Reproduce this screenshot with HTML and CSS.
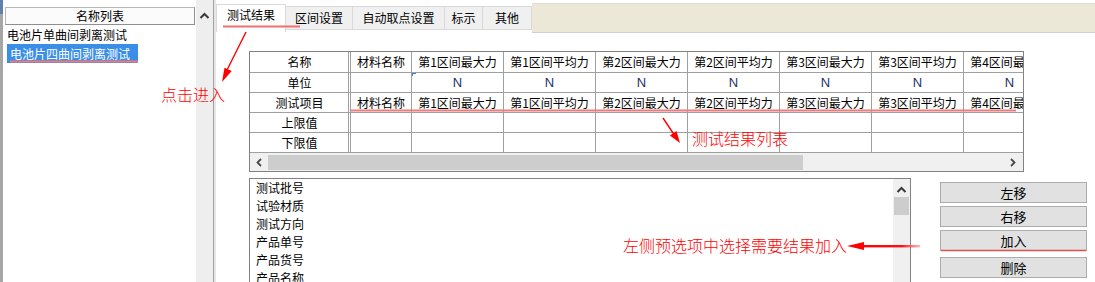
FILE: index.html
```html
<!DOCTYPE html>
<html lang="zh-CN">
<head>
<meta charset="utf-8">
<title>测试结果设置</title>
<link rel="stylesheet" href="styles.css">
</head>
<body>
<div class="app">
  <aside class="left">
    <div class="edge"></div>
    <div class="left-list">
      <div class="list-head">名称列表</div>
      <div class="list-item">电池片单曲间剥离测试</div>
      <div class="list-item"><span class="sel">电池片四曲间剥离测试</span></div>
    </div>
    <div class="vscroll">
      <svg class="vchev" width="11" height="7" viewBox="0 0 11 7"><polyline points="1.5,6 5.5,2 9.5,6" fill="none" stroke="#3a3a3a" stroke-width="2"/></svg>
    </div>
  </aside>
  <div class="splitter"></div>
  <main class="right">
    <nav class="tabs">
      <div class="tab active">测试结果</div>
      <div class="tab t2">区间设置</div>
      <div class="tab t3">自动取点设置</div>
      <div class="tab t4">标示</div>
      <div class="tab t5">其他</div>
      <div class="tab-fill"></div>
    </nav>
    <section class="tab-body">
      <div class="grid-box">
        <div class="grid-view">
          <div class="grid">
            <div class="cell head">名称</div>
            <div class="cell">材料名称</div>
            <div class="cell">第1区间最大力</div>
            <div class="cell">第1区间平均力</div>
            <div class="cell">第2区间最大力</div>
            <div class="cell">第2区间平均力</div>
            <div class="cell">第3区间最大力</div>
            <div class="cell">第3区间平均力</div>
            <div class="cell">第4区间最大力</div>

            <div class="cell head">单位</div>
            <div class="cell"></div>
            <div class="cell unit mark">N</div>
            <div class="cell unit">N</div>
            <div class="cell unit">N</div>
            <div class="cell unit">N</div>
            <div class="cell unit">N</div>
            <div class="cell unit">N</div>
            <div class="cell unit">N</div>

            <div class="cell head">测试项目</div>
            <div class="cell">材料名称</div>
            <div class="cell">第1区间最大力</div>
            <div class="cell">第1区间平均力</div>
            <div class="cell">第2区间最大力</div>
            <div class="cell">第2区间平均力</div>
            <div class="cell">第3区间最大力</div>
            <div class="cell">第3区间平均力</div>
            <div class="cell">第4区间最大力</div>

            <div class="cell head">上限值</div>
            <div class="cell"></div><div class="cell"></div><div class="cell"></div><div class="cell"></div>
            <div class="cell"></div><div class="cell"></div><div class="cell"></div><div class="cell"></div>

            <div class="cell head">下限值</div>
            <div class="cell"></div><div class="cell"></div><div class="cell"></div><div class="cell"></div>
            <div class="cell"></div><div class="cell"></div><div class="cell"></div><div class="cell"></div>
          </div>
        </div>
        <div class="hscroll">
          <svg class="harrow" width="6" height="9" viewBox="0 0 6 9"><polyline points="5,1 1.5,4.5 5,8" fill="none" stroke="#4a4a4a" stroke-width="1.8"/></svg>
          <div class="hthumb"></div>
          <svg class="harrow r" width="6" height="9" viewBox="0 0 6 9"><polyline points="1,1 4.5,4.5 1,8" fill="none" stroke="#4a4a4a" stroke-width="1.8"/></svg>
        </div>
      </div>
      <div class="bottom">
        <div class="pick-list">
          <div class="items">
            <div class="item">测试批号</div>
            <div class="item">试验材质</div>
            <div class="item">测试方向</div>
            <div class="item">产品单号</div>
            <div class="item">产品货号</div>
            <div class="item">产品名称</div>
            <div class="item">产品规格</div>
          </div>
          <div class="vscroll2">
            <svg class="vchev" width="11" height="7" viewBox="0 0 11 7"><polyline points="1.5,6 5.5,2 9.5,6" fill="none" stroke="#3a3a3a" stroke-width="2"/></svg>
            <div class="vthumb"></div>
          </div>
        </div>
        <div class="buttons">
          <button class="btn">左移</button>
          <button class="btn">右移</button>
          <button class="btn">加入</button>
          <button class="btn gap">删除</button>
        </div>
      </div>
    </section>
  </main>

  <svg class="annot-lines" width="1095" height="282" viewBox="0 0 1095 282">
    <defs>
      <linearGradient id="fade" x1="0" y1="0" x2="1" y2="0">
        <stop offset="0" stop-color="#ff0000"/>
        <stop offset="0.7" stop-color="#ff1010"/>
        <stop offset="1" stop-color="#ff8080" stop-opacity="0.6"/>
      </linearGradient>
    </defs>
    <line x1="223" y1="26.5" x2="300" y2="26.5" stroke="#f07070" stroke-width="2"/>
    <line x1="10" y1="61.5" x2="138" y2="61.5" stroke="#f07a7a" stroke-width="2"/>
    <line x1="351" y1="110.5" x2="1016" y2="110.5" stroke="#f07a7a" stroke-width="2"/>
    <line x1="941" y1="250.5" x2="1086" y2="250.5" stroke="#e05050" stroke-width="1.5"/>
    <line x1="246" y1="32" x2="226" y2="72" stroke="#ff0000" stroke-width="1.4"/>
    <polygon points="222,82 231.7,71.1 224.5,67.7" fill="#ff0000"/>
    <line x1="663" y1="118" x2="675" y2="136" stroke="#ff0000" stroke-width="1.4"/>
    <polygon points="680,143 669.9,135.4 676.5,130.9" fill="#ff0000"/>
    <rect x="860" y="245" width="60" height="2.4" fill="url(#fade)"/>
    <polygon points="847,246 864,242 864,250" fill="#ff0000"/>
  </svg>
  <div class="note n1">点击进入</div>
  <div class="note n2">测试结果列表</div>
  <div class="note n3">左侧预选项中选择需要结果加入</div>
</div>
</body>
</html>
```

FILE: styles.css
```css
* { box-sizing: border-box; }
html, body {
  margin: 0;
  padding: 0;
  width: 1095px;
  height: 282px;
  overflow: hidden;
  background: #fff;
}
body {
  font-family: "Noto Sans CJK SC", "Microsoft YaHei", "Liberation Sans", sans-serif;
  font-size: 12px;
  color: #000;
}
.app {
  position: relative;
  display: flex;
  width: 1095px;
  height: 282px;
}

/* left panel */
.left {
  display: flex;
  width: 213px;
  height: 282px;
  flex: none;
}
.edge {
  width: 3px;
  flex: none;
  background: linear-gradient(#5d80b0 0, #5d80b0 14px, #a6a6a6 14px, #a6a6a6 100%);
}
.left-list {
  width: 193px;
  flex: none;
  background: #fff;
  padding: 7px 1px 0 2px;
}
.list-head {
  height: 18px;
  border: 1px solid #a0a0a0;
  border-color: #b8b8b8 #8f8f8f #8f8f8f #b8b8b8;
  background: #fbfbfb;
  text-align: center;
  line-height: 16px;
}
.list-item {
  height: 19px;
  line-height: 19px;
  padding-left: 2px;
  white-space: nowrap;
}
.sel {
  display: inline-block;
  background: #3a8ee6;
  color: #fff;
  padding: 0 8px 0 3px;
}
.vscroll {
  width: 17px;
  flex: none;
  background: #eeeeee;
  display: flex;
  flex-direction: column;
  align-items: center;
  padding-top: 12px;
}
.vchev {
  display: block;
  flex: none;
}
.splitter {
  width: 3px;
  flex: none;
  border-left: 1px solid #a0a0a0;
  background: #e6e6e6;
}

/* right panel */
.right {
  flex: 1;
  min-width: 0;
}
.tabs {
  display: flex;
  align-items: flex-start;
  height: 32px;
}
.tab {
  margin-top: 6px;
  height: 24px;
  background: #f0f0f0;
  border: 1px solid #d9d9d9;
  border-left: none;
  text-align: center;
  line-height: 22px;
  white-space: nowrap;
  flex: none;
}
.tab.active {
  margin-top: 4px;
  height: 28px;
  width: 70px;
  background: #fff;
  border-left: 1px solid #d9d9d9;
  border-bottom: none;
  line-height: 20px;
}
.t2 { width: 67px; }
.t3 { width: 92px; }
.t4 { width: 38px; }
.t5 { width: 49px; }
.tab-fill {
  flex: 1;
  margin-top: 3px;
  height: 30px;
  background: #ebe8d8;
  border-top: 1px solid #dcdcd6;
  border-bottom: 1px solid #d0d0cc;
}
.tab-body {
  padding-left: 33px;
}
.grid-box {
  margin-top: 19px;
  width: 775px;
  height: 121px;
  border: 1px solid #828282;
}
.grid-view {
  height: 101px;
  overflow: hidden;
}
.grid {
  display: grid;
  grid-template-columns: 100px 60px repeat(7, 91px);
  grid-template-rows: 20px repeat(4, 19px);
  gap: 1px;
  padding-bottom: 1px;
  background: #a0a0a0;
  width: max-content;
}
.cell {
  position: relative;
  background: #fff;
  display: flex;
  align-items: center;
  justify-content: center;
  white-space: nowrap;
  overflow: hidden;
  line-height: 16px;
}
.cell.head {
  border-right: 1px solid #fff;
  box-shadow: inset -1px 0 0 #a0a0a0;
}
.unit {
  color: #1c2f6e;
  font-family: "Liberation Sans", sans-serif;
  font-size: 13px;
}
.mark::before {
  content: "";
  position: absolute;
  left: 0;
  top: 0;
  width: 3px;
  height: 2px;
  border-top: 1px solid #3a7fe0;
  border-left: 1px solid #3a7fe0;
}
.hscroll {
  height: 18px;
  background: #f0f0f0;
  display: flex;
  align-items: center;
  padding: 0 7px 0 6px;
}
.harrow { display: block; flex: none; }
.hthumb {
  margin-left: 6px;
  width: 535px;
  height: 15px;
  background: #cdcdcd;
}
.harrow.r { margin-left: auto; }

.bottom {
  display: flex;
  align-items: flex-start;
  margin-top: 6px;
}
.pick-list {
  display: flex;
  width: 662px;
  height: 120px;
  border: 1px solid #828282;
}
.items {
  flex: 1;
  padding-left: 6px;
}
.item {
  height: 18px;
  line-height: 18px;
  white-space: nowrap;
}
.vscroll2 {
  width: 17px;
  flex: none;
  background: #f0f0f0;
  display: flex;
  flex-direction: column;
  align-items: center;
  padding-top: 7px;
}
.vthumb {
  margin-top: 4px;
  width: 15px;
  height: 18px;
  background: #cdcdcd;
}
.buttons {
  margin-left: 29px;
  margin-top: 4px;
  width: 147px;
  display: flex;
  flex-direction: column;
  gap: 3px;
}
.btn {
  height: 21px;
  padding: 0;
  margin: 0;
  background: #e1e1e1;
  border: 1px solid #adadad;
  font-family: "Noto Sans CJK SC", "Microsoft YaHei", sans-serif;
  font-size: 13px;
  line-height: 18px;
  color: #000;
}
.btn.gap { margin-top: 3px; }

/* annotations */
.annot-lines {
  position: absolute;
  left: 0;
  top: 0;
  pointer-events: none;
}
.note {
  position: absolute;
  color: #ff0000;
  font-size: 16px;
  font-weight: 300;
  line-height: 16px;
  white-space: nowrap;
}
.n1 { left: 161px; top: 86px; }
.n2 { left: 692px; top: 130px; }
.n3 { left: 623px; top: 237px; }
```
